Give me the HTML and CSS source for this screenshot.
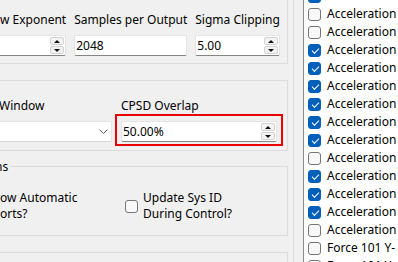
FILE: index.html
```html
<!DOCTYPE html>
<html>
<head>
<meta charset="utf-8">
<link rel="stylesheet" href="styles.css">
</head>
<body>
<div class="window">
  <div class="settings">
    <div class="group group-spectral">
      <div class="fields">
        <div class="field field-exponent">
          <div class="label">w Exponent</div>
          <div class="textbox">
            <span class="value"></span>
            <span class="spin"><span class="spin-btn up"></span><span class="spin-btn down"></span></span>
          </div>
        </div>
        <div class="field field-samples">
          <div class="label">Samples per Output</div>
          <div class="textbox"><span class="value">2048</span></div>
        </div>
        <div class="field field-sigma">
          <div class="label">Sigma Clipping</div>
          <div class="textbox">
            <span class="value">5.00</span>
            <span class="spin"><span class="spin-btn up"></span><span class="spin-btn down"></span></span>
          </div>
        </div>
      </div>
    </div>

    <div class="group group-cpsd">
      <div class="fields">
        <div class="field field-window">
          <div class="label">Window</div>
          <div class="combobox">
            <span class="value"></span>
            <svg class="chevron" width="9" height="5" viewBox="0 0 9 5"><polyline points="0.5,0.5 4.5,4.5 8.5,0.5" fill="none" stroke="#5c5c5c" stroke-width="1"/></svg>
          </div>
        </div>
        <div class="field field-overlap">
          <div class="label">CPSD Overlap</div>
          <div class="textbox highlight">
            <span class="value">50.00%</span>
            <span class="spin"><span class="spin-btn up"></span><span class="spin-btn down"></span></span>
          </div>
        </div>
      </div>
    </div>

    <fieldset class="group group-options">
      <legend>ns</legend>
      <div class="options">
        <div class="check-item">
          <span class="cb"></span>
          <span class="check-text">ow Automatic orts?</span>
        </div>
        <div class="check-item">
          <span class="cb"></span>
          <span class="check-text">Update Sys ID During Control?</span>
        </div>
      </div>
    </fieldset>

    <div class="group group-next"></div>
  </div>

  <div class="list-pane">
    <ul class="checklist">
      <li><span class="cb on"></span><span class="item-text">Acceleration</span></li>
      <li><span class="cb"></span><span class="item-text">Acceleration</span></li>
      <li><span class="cb"></span><span class="item-text">Acceleration</span></li>
      <li><span class="cb on"></span><span class="item-text">Acceleration</span></li>
      <li><span class="cb on"></span><span class="item-text">Acceleration</span></li>
      <li><span class="cb on"></span><span class="item-text">Acceleration</span></li>
      <li><span class="cb on"></span><span class="item-text">Acceleration</span></li>
      <li><span class="cb on"></span><span class="item-text">Acceleration</span></li>
      <li><span class="cb on"></span><span class="item-text">Acceleration</span></li>
      <li><span class="cb"></span><span class="item-text">Acceleration</span></li>
      <li><span class="cb on"></span><span class="item-text">Acceleration</span></li>
      <li><span class="cb on"></span><span class="item-text">Acceleration</span></li>
      <li><span class="cb on"></span><span class="item-text">Acceleration</span></li>
      <li><span class="cb"></span><span class="item-text">Acceleration</span></li>
      <li><span class="cb"></span><span class="item-text">Force 101 Y-</span></li>
      <li><span class="cb"></span><span class="item-text">Force 101 Y+</span></li>
    </ul>
  </div>
</div>
</body>
</html>
```

FILE: styles.css
```css
* { box-sizing: border-box; }

html, body {
  margin: 0;
  padding: 0;
}

body {
  width: 398px;
  height: 262px;
  overflow: hidden;
  background: #f0f0f0;
  font-family: "Noto Sans", "Open Sans", sans-serif;
  font-size: 12px;
  color: #000;
}

.window {
  display: flex;
  gap: 9px;
  height: 262px;
}

/* ---------- left settings pane ---------- */
.settings {
  flex: 0 0 294px;
  border-right: 1px solid #dadada;
  overflow: hidden;
}

.group {
  margin: 0 5px 0 -50px;
  border: 1px solid #dcdcdc;
}

.group-spectral {
  margin-top: -10px;
  padding: 21px 10px 7px 9px;
}

.group-cpsd {
  margin-top: 16px;
  padding: 17px 10px 8px 9px;
}

.group-next {
  margin-top: 16px;
  height: 40px;
}

.fields {
  display: flex;
  gap: 8px;
}

.group-cpsd .fields { gap: 9px; }

.field { display: flex; flex-direction: column; }
.field-exponent { flex: 0 0 106px; }
.field-samples { flex: 0 0 111px; }
.field-sigma { flex: 1 1 auto; }
.field-window { flex: 0 0 152px; }
.field-overlap { flex: 1 1 auto; }

.label {
  line-height: 16px;
  margin-bottom: 7px;
  white-space: nowrap;
}

.field-exponent .label { padding-left: 40px; }
.field-window .label { padding-left: 39px; }

.textbox,
.combobox {
  display: flex;
  align-items: center;
  height: 21px;
  background: #fff;
  border: 1px solid #e4e4e4;
  border-radius: 2px;
}

.textbox { border-bottom-color: #858585; }
.combobox { border-bottom-color: #d6d6d6; }

.value {
  flex: 1 1 auto;
  padding-left: 1px;
  line-height: 19px;
  white-space: nowrap;
}

.chevron {
  margin-right: 3px;
  display: block;
}

.spin {
  display: flex;
  flex-direction: column;
  gap: 1px;
  margin-right: 1px;
}

.spin-btn {
  display: flex;
  align-items: center;
  justify-content: center;
  width: 14px;
  height: 8px;
  background: #f3f3f3;
  border: 1px solid #d2d2d2;
  border-radius: 2px;
}

.spin-btn::before {
  content: "";
  border-left: 3px solid transparent;
  border-right: 3px solid transparent;
}

.spin-btn.up::before { border-bottom: 3px solid #111; }
.spin-btn.down::before { border-top: 3px solid #111; }

/* red annotation frame over the overlap input */
.highlight { position: relative; }
.highlight::after {
  content: "";
  position: absolute;
  left: -7px;
  right: -7px;
  top: -8px;
  bottom: -5px;
  border: 2px solid #ea0000;
  pointer-events: none;
}

/* options group */
fieldset.group-options {
  min-width: 0;
  margin-top: 8px;
  padding: 16px 10px 13px 31px;
}

.group-options legend {
  margin-left: 13px;
  padding: 0 2px 0 0;
  line-height: 15px;
  font-size: 12px;
}

.options {
  display: grid;
  grid-template-columns: 143px 1fr;
}

.check-item {
  display: flex;
  align-items: center;
  gap: 5px;
}

.check-text {
  width: 100px;
  line-height: 16px;
}

/* checkbox */
.cb {
  position: relative;
  flex: 0 0 13px;
  width: 13px;
  height: 13px;
  border: 1px solid #777;
  border-radius: 3px;
  background: #f8f8f8;
}

.cb.on {
  background: #005fb8;
  border-color: #005fb8;
}

.cb.on::after {
  content: "";
  position: absolute;
  left: 3px;
  top: 3px;
  width: 6px;
  height: 3px;
  border-left: 1px solid #fff;
  border-bottom: 1px solid #fff;
  transform: rotate(-45deg);
}

/* ---------- right checked list ---------- */
.list-pane {
  flex: 1 1 auto;
  background: #fff;
  border-left: 1px solid #8c8c8c;
  overflow: hidden;
}

.checklist {
  list-style: none;
  margin: -13px 0 0;
  padding: 0 0 0 4px;
}

.checklist li {
  display: flex;
  align-items: flex-start;
  gap: 6px;
  height: 18px;
}

.checklist .cb { margin-top: 3px; }

.item-text {
  line-height: 18px;
  white-space: nowrap;
}
```
